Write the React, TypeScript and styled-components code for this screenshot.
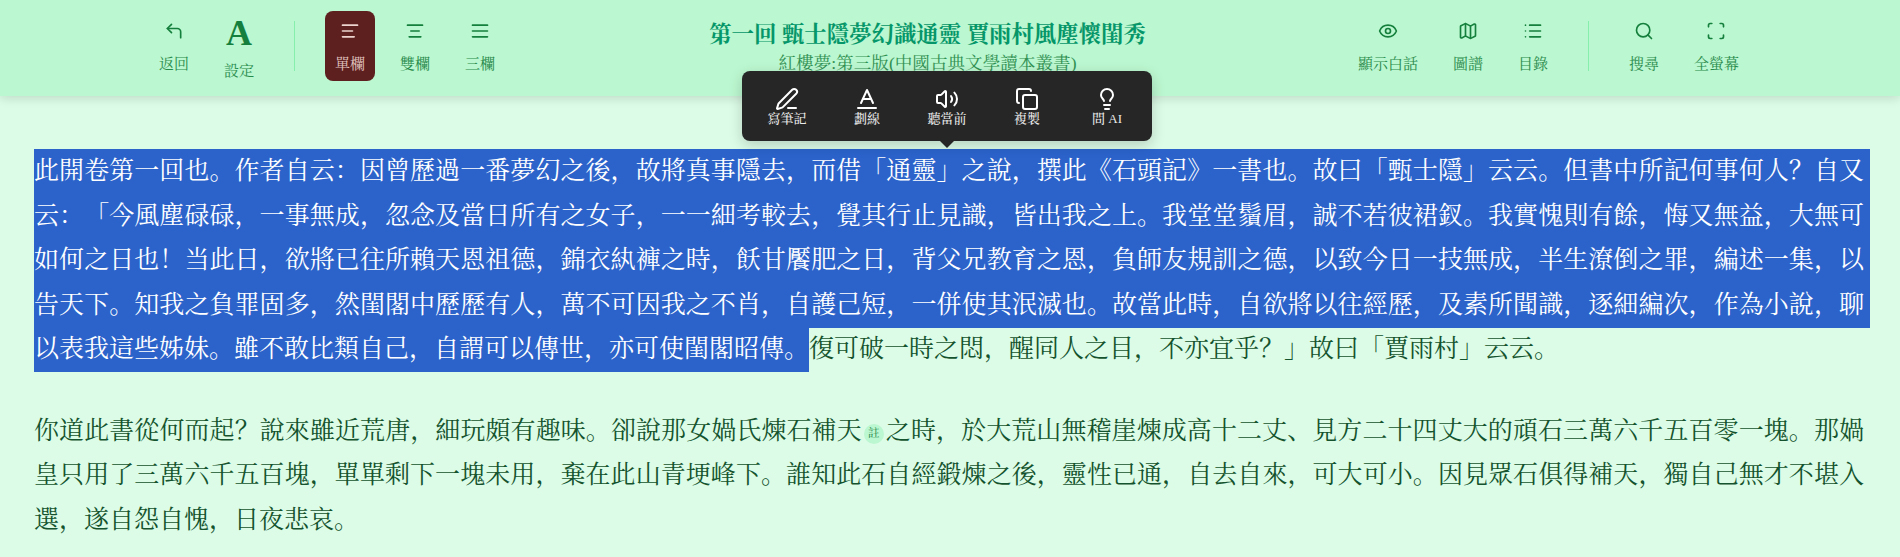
import React, { useEffect, useRef } from 'react';
import styled, { createGlobalStyle } from 'styled-components';
import {
  AlignCenter,
  AlignJustify,
  AlignLeft,
  Copy,
  CornerUpLeft,
  Eye,
  Lightbulb,
  List,
  Map as MapIcon,
  PenLine,
  Scan,
  Search,
  Volume2,
} from 'lucide-react';

const serif = '"Liberation Serif", "Noto Serif CJK SC", "Noto Sans CJK SC", serif';

const GlobalStyle = createGlobalStyle`
  html, body {
    margin: 0;
    height: 100%;
    overflow: hidden;
    background: #dcfce7;
    font-family: ${serif};
  }

  ::selection {
    background: #2b63cb;
    color: #fff;
  }
`;

const Header = styled.header`
  position: relative;
  display: flex;
  align-items: flex-start;
  justify-content: space-between;
  height: 96px;
  padding: 11px 151px 0 149px;
  box-sizing: border-box;
  background: #bbf7d0;
  box-shadow: 0 2px 10px rgba(0, 0, 0, 0.14);
`;

const ToolGroup = styled.div`
  display: flex;
  align-items: flex-start;
  gap: 15px;
`;

const ToolButton = styled.div<{ $active?: boolean }>`
  display: flex;
  flex-direction: column;
  align-items: center;
  height: 70px;
  padding: 10px 10px 0;
  box-sizing: border-box;
  border-radius: 8px;
  background: ${props => (props.$active ? '#5e1f1f' : 'transparent')};
  color: ${props => (props.$active ? '#ecd3cd' : '#15803d')};

  svg {
    display: block;
  }
`;

const ToolLabel = styled.span`
  margin-top: 12px;
  font-size: 15px;
  line-height: 22px;
  white-space: nowrap;
  opacity: 0.9;
`;

const FontGlyph = styled.span`
  display: block;
  height: 25px;
  font-size: 36px;
  font-weight: 700;
  line-height: 25px;
`;

const FontLabel = styled(ToolLabel)`
  margin-top: 14px;
`;

const Divider = styled.div`
  align-self: center;
  width: 1px;
  height: 50px;
  margin: 0 15px;
  background: #86efac;
`;

const TitleBlock = styled.div`
  margin-left: 2px;
  padding-top: 8px;
  text-align: center;
`;

const Title = styled.h1`
  margin: 0;
  color: #059669;
  font-size: 22.4px;
  font-weight: 700;
  line-height: 32px;
`;

const Subtitle = styled.div`
  color: #15803d;
  font-size: 17.6px;
  line-height: 24px;
  opacity: 0.85;
`;

const Popup = styled.div`
  position: absolute;
  top: 71px;
  left: 742px;
  z-index: 10;
  display: flex;
  justify-content: center;
  width: 410px;
  height: 70px;
  border-radius: 8px;
  background: #262626;
  box-shadow: 0 4px 14px rgba(0, 0, 0, 0.18);

  &::after {
    content: '';
    position: absolute;
    bottom: -7px;
    left: 198px;
    border-top: 7px solid #262626;
    border-left: 7px solid transparent;
    border-right: 7px solid transparent;
  }
`;

const PopupItem = styled.div`
  display: flex;
  flex-direction: column;
  align-items: center;
  width: 80px;
  padding-top: 16px;
  color: #fff;
`;

const PopupLabel = styled.span`
  margin-top: -1px;
  font-size: 13px;
  font-weight: 500;
  line-height: 18px;
  opacity: 0.9;
`;

const Content = styled.main`
  padding: 53.25px 36px 0 34px;
`;

const Paragraph = styled.p`
  margin: 0 0 37px;
  color: #14532d;
  font-size: 25px;
  line-height: 44.5px;
  text-align: justify;
  text-spacing-trim: space-all;
`;

const NoteMark = styled.span`
  display: inline-flex;
  align-items: center;
  justify-content: center;
  width: 20px;
  height: 20px;
  margin: 0 2px;
  border-radius: 50%;
  background: #bbf7d0;
  color: #15803d;
  font-size: 11.5px;
  line-height: 1;
  vertical-align: 2px;
`;

const StrikeIcon = () => (
  <svg width="24" height="24" viewBox="0 0 24 24" fill="none" stroke="currentColor" strokeWidth="2" strokeLinecap="round" strokeLinejoin="round">
    <path d="M6 16 12 3l6 13" />
    <path d="M8 12h8" />
    <path d="M3 21h18" />
  </svg>
);

const leftTools = [
  { label: '單欄', icon: <AlignLeft size={20} />, active: true },
  { label: '雙欄', icon: <AlignCenter size={20} /> },
  { label: '三欄', icon: <AlignJustify size={20} /> },
];

const readTools = [
  { label: '顯示白話', icon: <Eye size={20} /> },
  { label: '圖譜', icon: <MapIcon size={20} /> },
  { label: '目錄', icon: <List size={20} /> },
];

const pageTools = [
  { label: '搜尋', icon: <Search size={20} /> },
  { label: '全螢幕', icon: <Scan size={20} /> },
];

const popupItems = [
  { label: '寫筆記', icon: <PenLine size={24} /> },
  { label: '劃線', icon: <StrikeIcon /> },
  { label: '聽當前', icon: <Volume2 size={24} /> },
  { label: '複製', icon: <Copy size={24} /> },
  { label: '問 AI', icon: <Lightbulb size={24} /> },
];

// the source text uses full-width punctuation throughout
const fullWidth = (text: string) =>
  text
    .replace(/,/g, '\uFF0C')
    .replace(/:/g, '\uFF1A')
    .replace(/\?/g, '\uFF1F')
    .replace(/!/g, '\uFF01');

const selectedText = fullWidth(
  '此開卷第一回也。作者自云:因曾歷過一番夢幻之後,故將真事隱去,而借「通靈」之說,撰此《石頭記》一書也。故曰「甄士隱」云云。但書中所記何事何人?自又云:「今風塵碌碌,一事無成,忽念及當日所有之女子,一一細考較去,覺其行止見識,皆出我之上。我堂堂鬚眉,誠不若彼裙釵。我實愧則有餘,悔又無益,大無可如何之日也!当此日,欲將已往所賴天恩祖德,錦衣紈褲之時,飫甘饜肥之日,背父兄教育之恩,負師友規訓之德,以致今日一技無成,半生潦倒之罪,編述一集,以告天下。知我之負罪固多,然閨閣中歷歷有人,萬不可因我之不肖,自護己短,一併使其泯滅也。故當此時,自欲將以往經歷,及素所聞識,逐細編次,作為小說,聊以表我這些姊妹。雖不敢比類自己,自謂可以傳世,亦可使閨閣昭傳。',
);
const restText = fullWidth('復可破一時之悶,醒同人之目,不亦宜乎?」故曰「賈雨村」云云。');
const beforeNote = fullWidth('你道此書從何而起?說來雖近荒唐,細玩頗有趣味。卻說那女媧氏煉石補天');
const afterNote = fullWidth(
  '之時,於大荒山無稽崖煉成高十二丈、見方二十四丈大的頑石三萬六千五百零一塊。那媧皇只用了三萬六千五百塊,單單剩下一塊未用,棄在此山青埂峰下。誰知此石自經鍛煉之後,靈性已通,自去自來,可大可小。因見眾石俱得補天,獨自己無才不堪入選,遂自怨自愧,日夜悲哀。',
);

export default function App() {
  const selectedRef = useRef<HTMLSpanElement>(null);

  useEffect(() => {
    if (!selectedRef.current) return;
    const range = document.createRange();
    range.selectNodeContents(selectedRef.current);
    const selection = window.getSelection();
    selection?.removeAllRanges();
    selection?.addRange(range);
  }, []);

  return (
    <>
      <GlobalStyle />
      <Header>
        <ToolGroup>
          <ToolButton>
            <CornerUpLeft size={20} />
            <ToolLabel>返回</ToolLabel>
          </ToolButton>
          <ToolButton>
            <FontGlyph>A</FontGlyph>
            <FontLabel>設定</FontLabel>
          </ToolButton>
          <Divider />
          {leftTools.map(tool => (
            <ToolButton key={tool.label} $active={tool.active}>
              {tool.icon}
              <ToolLabel>{tool.label}</ToolLabel>
            </ToolButton>
          ))}
        </ToolGroup>
        <TitleBlock>
          <Title>第一回 甄士隱夢幻識通靈 賈雨村風塵懷閨秀</Title>
          <Subtitle>紅樓夢:第三版(中國古典文學讀本叢書)</Subtitle>
        </TitleBlock>
        <ToolGroup>
          {readTools.map(tool => (
            <ToolButton key={tool.label}>
              {tool.icon}
              <ToolLabel>{tool.label}</ToolLabel>
            </ToolButton>
          ))}
          <Divider />
          {pageTools.map(tool => (
            <ToolButton key={tool.label}>
              {tool.icon}
              <ToolLabel>{tool.label}</ToolLabel>
            </ToolButton>
          ))}
        </ToolGroup>
      </Header>
      <Popup>
        {popupItems.map(item => (
          <PopupItem key={item.label}>
            {item.icon}
            <PopupLabel>{item.label}</PopupLabel>
          </PopupItem>
        ))}
      </Popup>
      <Content>
        <Paragraph>
          <span ref={selectedRef}>{selectedText}</span>
          {restText}
        </Paragraph>
        <Paragraph>
          {beforeNote}
          <NoteMark>註</NoteMark>
          {afterNote}
        </Paragraph>
      </Content>
    </>
  );
}
